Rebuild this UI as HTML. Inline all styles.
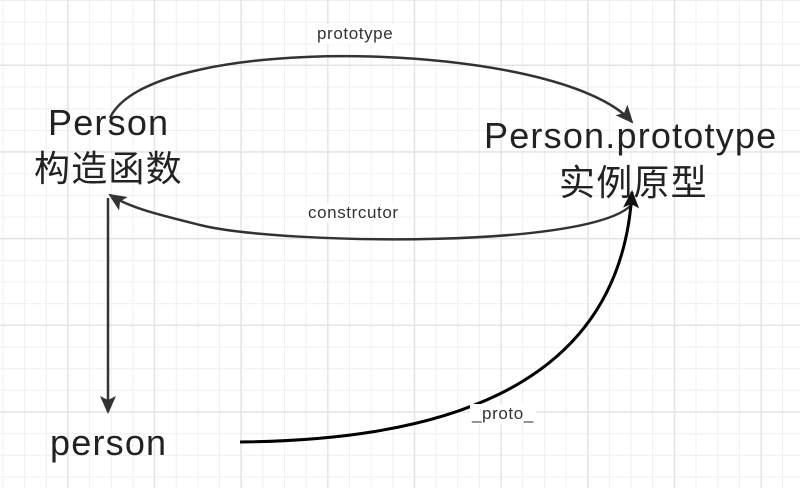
<!DOCTYPE html>
<html><head><meta charset="utf-8"><style>
html,body{margin:0;padding:0}
body{width:800px;height:488px;position:relative;overflow:hidden;background:#fff;
background-image:
linear-gradient(90deg,#e4e4e4 1.5px,transparent 1.5px),
linear-gradient(0deg,#e4e4e4 1.5px,transparent 1.5px),
linear-gradient(90deg,#efefef 1px,transparent 1px),
linear-gradient(0deg,#efefef 1px,transparent 1px);
background-size:86.7px 86.7px,86.7px 86.7px,21.67px 21.67px,21.67px 21.67px;
background-position:67px 0,0 66px,2.5px 0,0 1px;
font-family:"Liberation Sans","Noto Sans CJK SC",sans-serif;color:#222}
.t{position:absolute;white-space:nowrap}
.big{font-size:36px;line-height:42px;letter-spacing:1.2px}
.lab{font-size:17px;letter-spacing:0.6px;background:#fff;padding:0 2px;color:#333}
svg{position:absolute;left:0;top:0}
</style></head><body>
<svg width="800" height="488" viewBox="0 0 800 488">
<defs>
<marker id="a" markerWidth="20" markerHeight="16" refX="16" refY="8" orient="auto" markerUnits="userSpaceOnUse"><path d="M0,0 L18,8 L0,16 L4,8z" fill="#333"/></marker>
<marker id="b" markerWidth="20" markerHeight="16" refX="16" refY="8" orient="auto" markerUnits="userSpaceOnUse"><path d="M0,0 L18,8 L0,16 L4,8z" fill="#111"/></marker>
</defs>
<path d="M110,118 C150,30 560,40 632,122" fill="none" stroke="#333" stroke-width="2.5" marker-end="url(#a)"/>
<path d="M635,200 C610,250 280,245 200,225 C160,215 130,208 110,195" fill="none" stroke="#333" stroke-width="2.5" marker-end="url(#a)"/>
<path d="M108,198 L108,412" fill="none" stroke="#333" stroke-width="2.5" marker-end="url(#a)"/>
<path d="M240,442 C420,440 620,400 632,192" fill="none" stroke="#000" stroke-width="3" marker-end="url(#b)"/>
</svg>
<div class="t lab" style="left:315px;top:24px">prototype</div>
<div class="t lab" style="left:306px;top:203px">constrcutor</div>
<div class="t lab" style="left:470px;top:404px">_proto_</div>
<div class="t big" style="left:48px;top:102px">Person</div>
<div class="t big" style="left:34px;top:148px">构造函数</div>
<div class="t big" style="left:484px;top:115px">Person.prototype</div>
<div class="t big" style="left:559px;top:162px">实例原型</div>
<div class="t big" style="left:50px;top:422px">person</div>
</body></html>
